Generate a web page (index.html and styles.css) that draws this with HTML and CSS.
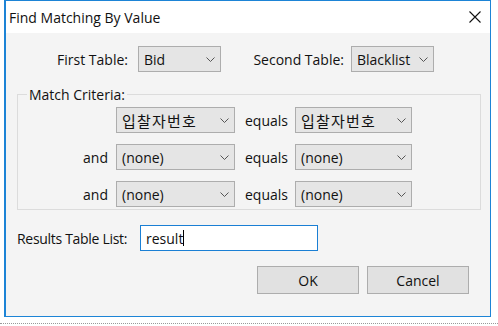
FILE: index.html
```html
<!DOCTYPE html>
<html lang="en">
<head>
  <meta charset="UTF-8">
  <title>Find Matching By Value</title>
  <link rel="stylesheet" href="styles.css">
</head>
<body>
  <div class="window">
    <div class="titlebar">
      <span class="title">Find Matching By Value</span>
      <svg class="close" width="12" height="12" viewBox="0 0 12 12">
        <path d="M0.5 0.5 L11.5 11.5 M11.5 0.5 L0.5 11.5" stroke="#111" stroke-width="1.1" fill="none"/>
      </svg>
    </div>
    <div class="content">
      <div class="tables-row">
        <span class="lbl first-lbl">First Table:</span>
        <div class="select table-select">
          <span>Bid</span>
          <svg class="chev" width="9" height="5" viewBox="0 0 9 5"><path d="M0.5 0.5 L4.5 4.5 L8.5 0.5" stroke="#555" fill="none"/></svg>
        </div>
        <span class="lbl second-lbl">Second Table:</span>
        <div class="select table-select">
          <span>Blacklist</span>
          <svg class="chev" width="9" height="5" viewBox="0 0 9 5"><path d="M0.5 0.5 L4.5 4.5 L8.5 0.5" stroke="#555" fill="none"/></svg>
        </div>
      </div>

      <fieldset class="criteria">
        <legend>Match Criteria:</legend>
        <div class="crit-row">
          <span class="and"></span>
          <div class="select col1">
            <span class="ko">입찰자번호</span>
            <svg class="chev" width="9" height="5" viewBox="0 0 9 5"><path d="M0.5 0.5 L4.5 4.5 L8.5 0.5" stroke="#555" fill="none"/></svg>
          </div>
          <span class="equals">equals</span>
          <div class="select col2">
            <span class="ko">입찰자번호</span>
            <svg class="chev" width="9" height="5" viewBox="0 0 9 5"><path d="M0.5 0.5 L4.5 4.5 L8.5 0.5" stroke="#555" fill="none"/></svg>
          </div>
        </div>
        <div class="crit-row">
          <span class="and">and</span>
          <div class="select col1">
            <span>(none)</span>
            <svg class="chev" width="9" height="5" viewBox="0 0 9 5"><path d="M0.5 0.5 L4.5 4.5 L8.5 0.5" stroke="#555" fill="none"/></svg>
          </div>
          <span class="equals">equals</span>
          <div class="select col2">
            <span>(none)</span>
            <svg class="chev" width="9" height="5" viewBox="0 0 9 5"><path d="M0.5 0.5 L4.5 4.5 L8.5 0.5" stroke="#555" fill="none"/></svg>
          </div>
        </div>
        <div class="crit-row">
          <span class="and">and</span>
          <div class="select col1">
            <span>(none)</span>
            <svg class="chev" width="9" height="5" viewBox="0 0 9 5"><path d="M0.5 0.5 L4.5 4.5 L8.5 0.5" stroke="#555" fill="none"/></svg>
          </div>
          <span class="equals">equals</span>
          <div class="select col2">
            <span>(none)</span>
            <svg class="chev" width="9" height="5" viewBox="0 0 9 5"><path d="M0.5 0.5 L4.5 4.5 L8.5 0.5" stroke="#555" fill="none"/></svg>
          </div>
        </div>
      </fieldset>

      <div class="results-row">
        <span class="results-lbl">Results Table List:</span>
        <div class="textbox">result<span class="caret"></span></div>
      </div>

      <div class="buttons">
        <div class="btn">OK</div>
        <div class="btn">Cancel</div>
      </div>
    </div>
  </div>
  <div class="dotted"></div>
</body>
</html>
```

FILE: styles.css
```css
body {
  margin: 0;
  font-family: "Open Sans", "Noto Sans CJK KR", sans-serif;
  font-size: 14px;
  color: #111;
  background: #fff;
}
.window {
  margin-left: 4px;
  width: 487px;
  height: 317px;
  box-sizing: border-box;
  border: 1px solid #1d84d6;
  border-left-width: 2px;
  background: #f4f4f4;
}
.titlebar {
  height: 32px;
  background: #fff;
  display: flex;
  align-items: center;
  padding-left: 3px;
}
.title {
  flex: 1;
}
.close {
  margin-right: 9px;
}
.content {
  padding-top: 13px;
}
.tables-row {
  display: flex;
  align-items: center;
}
.lbl {
  width: 123px;
  text-align: right;
}
.first-lbl {
  width: 122px;
  margin-right: 10px;
}
.second-lbl {
  margin-right: 7px;
}
.select {
  height: 26px;
  box-sizing: border-box;
  border: 1px solid #adadad;
  background: #e5e5e5;
  display: flex;
  align-items: center;
  justify-content: space-between;
  padding: 0 5px 0 5px;
}
.table-select {
  width: 83px;
}
.ko {
  font-size: 15px;
  letter-spacing: 1.2px;
}
.criteria {
  margin: 13px 9px 0 11px;
  padding: 3px 0 2px 0;
  border: 1px solid #dcdcdc;
}
.criteria legend {
  margin-left: 9px;
  padding: 0 2px;
  line-height: 19px;
}
.crit-row {
  display: flex;
  align-items: center;
  margin-bottom: 11px;
}
.crit-row:last-child {
  margin-bottom: 0;
}
.and {
  width: 90px;
  margin-right: 8px;
  text-align: right;
}
.col1 {
  width: 119px;
}
.equals {
  width: 60px;
  box-sizing: border-box;
  padding-left: 10px;
}
.col2 {
  width: 117px;
}
.results-row {
  display: flex;
  align-items: center;
  margin: 15px 0 0 11px;
}
.results-lbl {
  width: 123px;
  letter-spacing: -0.3px;
}
.textbox {
  width: 178px;
  height: 26px;
  box-sizing: border-box;
  border: 1px solid #1a7fd4;
  background: #fff;
  display: flex;
  align-items: center;
  padding-left: 5px;
}
.caret {
  width: 1px;
  height: 16px;
  background: #000;
}
.buttons {
  display: flex;
  justify-content: flex-end;
  gap: 8px;
  margin: 15px 21px 0 0;
}
.btn {
  width: 102px;
  height: 28px;
  box-sizing: border-box;
  border: 1px solid #adadad;
  background: #e1e1e1;
  display: flex;
  align-items: center;
  justify-content: center;
}
.dotted {
  margin-top: 6px;
  border-top: 1px dotted #999;
}
```
